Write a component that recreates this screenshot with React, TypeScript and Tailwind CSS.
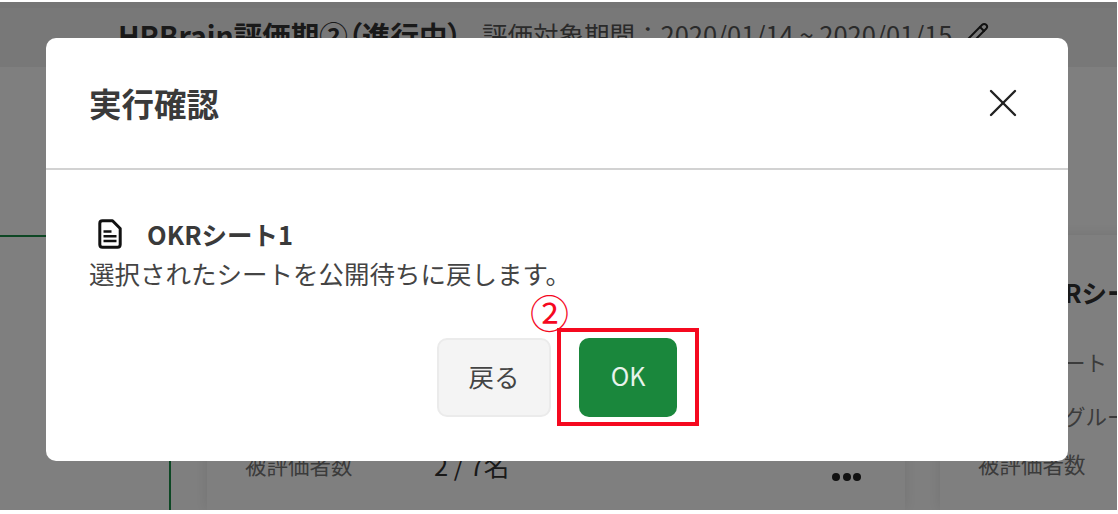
import { Pencil, X } from 'lucide-react'

function DocIcon({ className }: { className?: string }) {
  return (
    <svg viewBox="0 0 24 30" fill="none" stroke="#111" className={className}>
      <path d="M1.8 4.5 Q1.8 1.8 4.5 1.8 H14.5 L22.2 9.5 V25.5 Q22.2 28.2 19.5 28.2 H4.5 Q1.8 28.2 1.8 25.5 Z" strokeWidth="3" strokeLinejoin="round" />
      <path d="M5.5 12.5 H13.5 M5.5 17.2 H18.5 M5.5 22 H18.5" strokeWidth="2.5" />
    </svg>
  )
}

function MoreDots() {
  return (
    <span className="ml-auto mt-[24px] flex gap-[2.5px]">
      <i className="h-[8px] w-[8px] rounded-full bg-[#222]" />
      <i className="h-[8px] w-[8px] rounded-full bg-[#222]" />
      <i className="h-[8px] w-[8px] rounded-full bg-[#222]" />
    </span>
  )
}

export default function App() {
  return (
    <div className="h-[514px] w-[1118px] overflow-hidden bg-white pt-[2px] font-['Noto_Sans_CJK_JP','Noto_Sans',sans-serif]">
      <div className="relative h-[508px] w-[1117px] overflow-hidden bg-white">
        {/* 背景ページ */}
        <div className="h-[6px] bg-[#ebebeb]" />
        <header className="flex h-[59px] items-start bg-[#f1f1f1] pl-[118px] pt-[8px]">
          <span className="w-[364px] whitespace-nowrap text-[28.5px] font-bold leading-[38px] text-[#333] [font-feature-settings:'palt']">{'HRBrain評価期②\uFF08進行中\uFF09'}</span>
          <span className="flex items-center gap-[12px] whitespace-nowrap text-[25.5px] leading-[36px] text-[#555]">
            {'評価対象期間\uFF1A2020/01/14 ~ 2020/01/15'}
            <Pencil className="h-[24px] w-[24px] text-[#222]" />
          </span>
        </header>
        <div className="flex h-[443px] gap-[35px] pl-[207px] pt-[168px]">
          {/* 左のカードは下の行だけ見えている */}
          <div className="flex w-[698px] shrink-0 flex-col justify-end bg-white pb-[30px] pl-[38px] pr-[44px] shadow-[0_0_14px_rgba(0,0,0,0.1)]">
            <div className="flex h-[30px] items-center text-[21.5px] text-[#777]">
              <span className="w-[189px]">被評価者数</span>
              <span className="text-[25.5px] text-[#333]">2 / 7名</span>
              <MoreDots />
            </div>
          </div>
          <div className="w-[400px] shrink-0 bg-white pl-[38px] shadow-[0_0_14px_rgba(0,0,0,0.1)]">
            <div className="mt-[40px] flex h-[34px] items-center gap-[25px]">
              <DocIcon className="h-[30px] w-[24px]" />
              <span className="text-[25.5px] font-bold text-[#333]">OKRシート1</span>
            </div>
            <div className="mt-[38px] flex h-[30px] items-center text-[21.5px] text-[#777]">評価用シート</div>
            <div className="mt-[24px] flex h-[30px] items-center text-[21.5px] text-[#777]">被評価者グループ</div>
            <div className="mt-[18px] flex h-[30px] items-center text-[21.5px] text-[#777]">被評価者数</div>
          </div>
        </div>
        <div className="absolute left-0 top-[233px] h-[275px] w-[171px] border-r-2 border-t-2 border-[#1a8f48]" />

        {/* オーバーレイ */}
        <div className="absolute inset-0 bg-black/50" />

        {/* モーダル */}
        <div className="absolute left-[46px] top-[36px] flex h-[423px] w-[1022px] flex-col rounded-[10px] bg-white">
          <div className="flex h-[132px] shrink-0 items-center justify-between border-b-2 border-[#d2d2d2] pl-[43px] pr-[41px]">
            <h2 className="text-[32.5px] font-bold leading-none text-[#3a3a3a]">実行確認</h2>
            <X className="h-[48px] w-[48px] text-[#222]" strokeWidth={1.2} />
          </div>
          <div className="flex flex-col pl-[43px] pt-[47px]">
            <div className="flex h-[34px] items-center gap-[25px] pl-[9px]">
              <DocIcon className="h-[30px] w-[24px]" />
              <span className="text-[25.5px] font-bold leading-none text-[#3a3a3a]">OKRシート1</span>
            </div>
            <p className="mt-[6px] text-[25.5px] leading-[32px] text-[#444]">選択されたシートを公開待ちに戻します。</p>
          </div>
          <div className="mt-[49px] flex justify-center gap-[28px]">
            <button className="h-[79px] w-[114px] rounded-[10px] border-2 border-[#ebebeb] bg-[#f4f4f4] pb-[3px] text-[25.5px] text-[#444]">
              戻る
            </button>
            <div className="relative">
              <button className="h-[79px] w-[98px] rounded-[10px] bg-[#1a873c] pb-[3px] text-[25px] text-white/90">OK</button>
              {/* 注釈 */}
              <div className="absolute left-[-22px] top-[-10px] h-[98px] w-[142px] border-4 border-[#f5091f]" />
              <span className="absolute left-[-49px] top-[-53px] text-[39px] leading-[52px] text-[#f5091f]">②</span>
            </div>
          </div>
        </div>
      </div>
    </div>
  )
}
